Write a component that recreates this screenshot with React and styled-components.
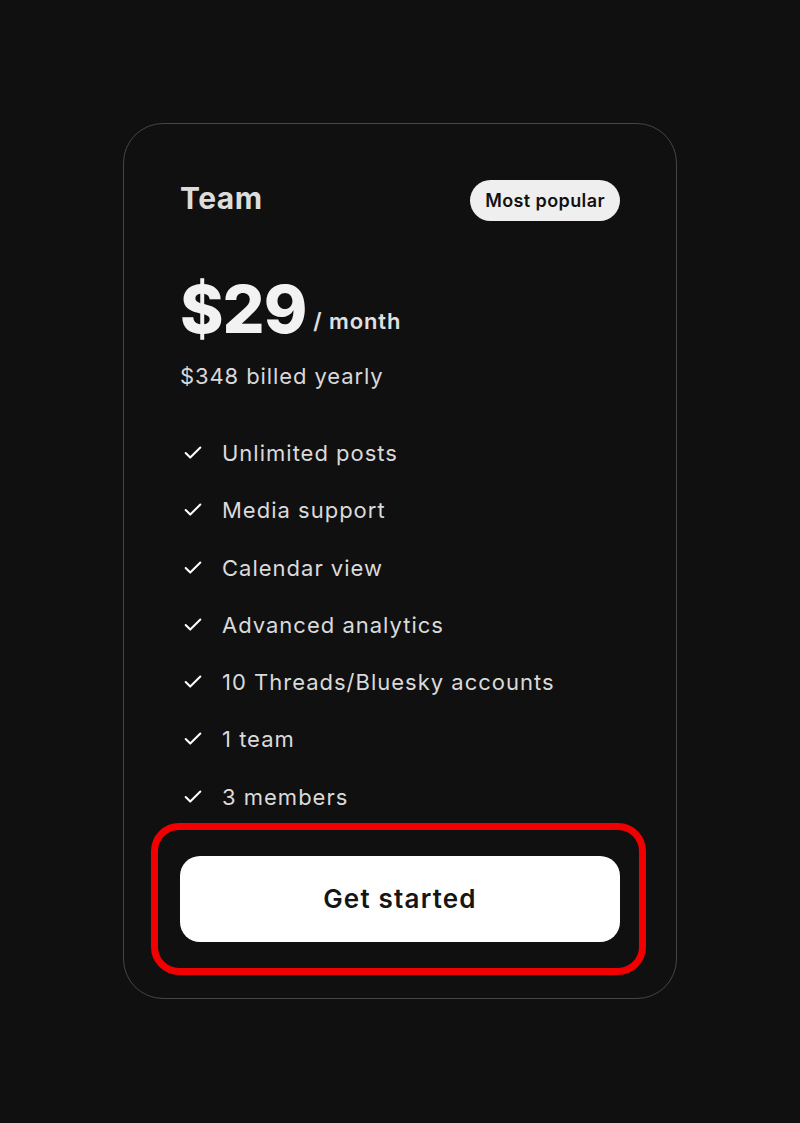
import React from "react";
import styled, { createGlobalStyle } from "styled-components";
import { Check } from "lucide-react";

const GlobalStyle = createGlobalStyle`
  html, body {
    margin: 0;
    background: #101010;
  }
  body {
    font-family: Inter, "Noto Sans", sans-serif;
    -webkit-font-smoothing: antialiased;
  }
`;

const Page = styled.main`
  min-height: 1123px;
  display: flex;
  justify-content: center;
  padding-top: 123px;
  box-sizing: border-box;
`;

const Card = styled.section`
  width: 554px;
  height: 876px;
  box-sizing: border-box;
  border: 1.5px solid #454545;
  border-radius: 40px;
  padding: 56px;
  display: flex;
  flex-direction: column;
  color: #e4e4e4;
`;

const Header = styled.div`
  display: flex;
  align-items: center;
  justify-content: space-between;
  height: 41px;
`;

const Title = styled.h2`
  margin: 0 0 6px;
  font-size: 30px;
  font-weight: 700;
  color: #dcdcdc;
  letter-spacing: 0.5px;
`;

const Badge = styled.span`
  background: #efefef;
  color: #111;
  font-size: 18px;
  font-weight: 600;
  height: 41px;
  padding: 0 15px;
  border-radius: 999px;
  display: inline-flex;
  align-items: center;
  letter-spacing: 0.4px;
`;

const PriceRow = styled.div`
  margin-top: 55px;
  display: flex;
  align-items: baseline;
  gap: 7px;
  line-height: 1;
`;

const Amount = styled.span`
  font-size: 66px;
  font-weight: 800;
  color: #f2f2f2;
  letter-spacing: -1px;
`;

const Period = styled.span`
  font-size: 22px;
  font-weight: 600;
  color: #e0e0e0;
  letter-spacing: 0.9px;
  transform: translateY(-4px);
`;

const Billed = styled.p`
  margin: 19px 0 0;
  font-size: 22px;
  line-height: 30px;
  color: #d8d8d8;
  letter-spacing: 0.9px;
`;

const Features = styled.ul`
  list-style: none;
  margin: 47px 0 0;
  padding: 0;
  display: flex;
  flex-direction: column;
  gap: 27.3px;
`;

const Feature = styled.li`
  display: flex;
  align-items: center;
  gap: 18px;
  font-size: 22px;
  line-height: 30px;
  color: #dadada;
  padding-left: 2px;
  letter-spacing: 1px;
`;

const ButtonWrap = styled.div`
  position: relative;
  margin-top: 44px;

  &::after {
    content: "";
    position: absolute;
    top: -33px;
    bottom: -33px;
    left: -29px;
    right: -26px;
    border: 7px solid #f00000;
    border-radius: 28px;
    pointer-events: none;
  }
`;

const Button = styled.button`
  width: 100%;
  height: 86px;
  border: none;
  border-radius: 20px;
  background: #ffffff;
  color: #151515;
  font-family: inherit;
  font-size: 26px;
  font-weight: 600;
  letter-spacing: 1.2px;
  cursor: pointer;
`;

const features = [
  "Unlimited posts",
  "Media support",
  "Calendar view",
  "Advanced analytics",
  "10 Threads/Bluesky accounts",
  "1 team",
  "3 members",
];

const App = () => {
  return (
    <Page>
      <GlobalStyle />
      <Card>
        <Header>
          <Title>Team</Title>
          <Badge>Most popular</Badge>
        </Header>
        <PriceRow>
          <Amount>$29</Amount>
          <Period>/ month</Period>
        </PriceRow>
        <Billed>$348 billed yearly</Billed>
        <Features>
          {features.map((f) => (
            <Feature key={f}>
              <Check size={22} strokeWidth={2.2} color="#ffffff" />
              {f}
            </Feature>
          ))}
        </Features>
        <ButtonWrap>
          <Button>Get started</Button>
        </ButtonWrap>
      </Card>
    </Page>
  );
};

export default App;
